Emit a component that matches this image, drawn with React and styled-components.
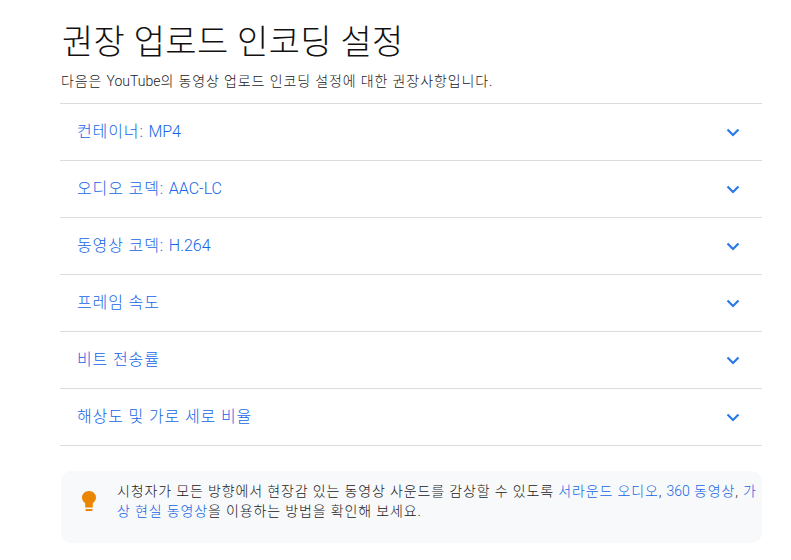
import React from 'react';
import styled, { createGlobalStyle } from 'styled-components';

const GlobalStyle = createGlobalStyle`
    html, body {
        margin: 0;
        padding: 0;
        background: #fff;
    }
    body {
        font-family: Roboto, "Noto Sans CJK KR", sans-serif;
        font-weight: 300;
        overflow: hidden;
    }
`;

const Page = styled.div`
    width: 791px;
    height: 560px;
    box-sizing: border-box;
    padding: 19px 29px 0 60px;
    overflow: hidden;
`;

const Title = styled.h1`
    margin: 0 0 0 2px;
    font-size: 34px;
    font-weight: 300;
    line-height: 46px;
    letter-spacing: .3px;
    color: #111;
`;

const Intro = styled.p`
    margin: 6px 0 12px 1px;
    font-size: 14px;
    line-height: 20px;
    letter-spacing: .88px;
    color: #202124;
`;

// latin words keep their normal width, only the hangul is spaced out
const Latin = styled.span`
    letter-spacing: 0;
`;

const List = styled.div`
    border-top: 1px solid #dadce0;
`;

const Row = styled.div`
    height: 56px;
    border-bottom: 1px solid #dadce0;
    display: flex;
    align-items: center;
    justify-content: space-between;
    padding: 0 22px 0 17px;
`;

const RowLabel = styled.span`
    font-size: 16px;
    line-height: 24px;
    letter-spacing: .88px;
    color: #1565e6;
`;

const Chevron = styled.svg`
    width: 14px;
    height: 9px;
    fill: none;
    stroke: #2979ea;
    stroke-width: 2.2;
`;

const Notice = styled.div`
    margin: 25px 0 0 1px;
    height: 72px;
    box-sizing: border-box;
    background: #f8f9fa;
    border-radius: 10px;
    display: flex;
    align-items: flex-start;
    padding: 10px 4px 0 21px;
    gap: 21px;
`;

const Bulb = styled.svg`
    width: 14px;
    height: 20px;
    margin-top: 10px;
    flex: none;
    fill: #ea8600;
`;

const NoticeText = styled.p`
    margin: 0;
    font-size: 14px;
    line-height: 20px;
    letter-spacing: .86px;
    color: #202124;
`;

const NoticeLink = styled.a`
    color: #1565e6;
    text-decoration: none;
`;

const rows = [
    <>컨테이너: <Latin>MP4</Latin></>,
    <>오디오 코덱: <Latin>AAC-LC</Latin></>,
    <>동영상 코덱: <Latin>H.264</Latin></>,
    '프레임 속도',
    '비트 전송률',
    '해상도 및 가로 세로 비율',
];

const App = () => (
    <Page>
        <GlobalStyle />
        <Title>권장 업로드 인코딩 설정</Title>
        <Intro>다음은 <Latin>YouTube</Latin>의 동영상 업로드 인코딩 설정에 대한 권장사항입니다.</Intro>
        <List>
            {rows.map((label, i) => (
                <Row key={i}>
                    <RowLabel>{label}</RowLabel>
                    <Chevron viewBox="0 0 14 9">
                        <path d="M1.5 1.5 L7 7 L12.5 1.5" />
                    </Chevron>
                </Row>
            ))}
        </List>
        <Notice>
            <Bulb viewBox="0 0 14 20">
                <path d="M7 0 C3 0 0 2.9 0 6.6 C0 9.2 1.3 11 3.2 12.2 L3.2 16.6 L10.8 16.6 L10.8 12.2 C12.7 11 14 9.2 14 6.6 C14 2.9 11 0 7 0 Z" />
                <rect x="3.6" y="18" width="6.8" height="2" />
            </Bulb>
            <NoticeText>
                시청자가 모든 방향에서 현장감 있는 동영상 사운드를 감상할 수 있도록{' '}
                <NoticeLink>서라운드 오디오</NoticeLink>, <NoticeLink><Latin>360</Latin> 동영상</NoticeLink>,{' '}
                <NoticeLink>가상 현실 동영상</NoticeLink>을 이용하는 방법을 확인해 보세요.
            </NoticeText>
        </Notice>
    </Page>
);

export default App;
